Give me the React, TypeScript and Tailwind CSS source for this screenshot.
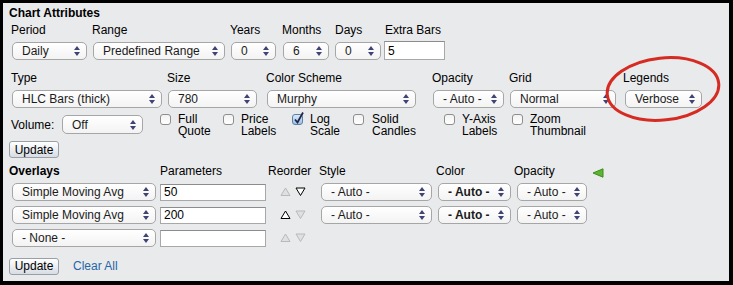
import React from "react";

type SelectProps = {
  value: string;
  className?: string;
  bold?: boolean;
};

function UpDown() {
  return (
    <svg width="6" height="10" viewBox="0 0 6 10" className="shrink-0">
      <path d="M0 4L3 0L6 4Z M0 6L3 10L6 6Z" fill="#3e4373" />
    </svg>
  );
}

function Select({ value, className = "", bold = false }: SelectProps) {
  return (
    <div
      className={`flex h-[18px] items-center justify-between rounded-[5px] border border-[#a6a6a6] bg-linear-to-b from-white to-[#f3f3f3] pl-[9px] pr-[6px] text-[12px] leading-none text-[#1b1b1b] ${
        bold ? "font-bold" : ""
      } ${className}`}
    >
      <span className="whitespace-nowrap">{value}</span>
      <UpDown />
    </div>
  );
}

function TextInput({ value = "", className = "" }: { value?: string; className?: string }) {
  return (
    <div
      className={`flex items-center border border-[#a8a8a8] border-t-[#8c8c8c] bg-white pl-[3px] text-[12px] leading-none text-black ${className}`}
    >
      {value}
    </div>
  );
}

function Field({
  label,
  className = "",
  children,
}: {
  label: string;
  className?: string;
  children: React.ReactNode;
}) {
  return (
    <div className={`flex shrink-0 flex-col ${className}`}>
      <span className="h-[15px] whitespace-nowrap leading-[15px]">{label}</span>
      {children}
    </div>
  );
}

function Check({
  top,
  bottom,
  checked = false,
  className = "",
  gap = "ml-[7px]",
}: {
  top: string;
  bottom: string;
  checked?: boolean;
  className?: string;
  gap?: string;
}) {
  return (
    <div className={`flex shrink-0 items-start ${className}`}>
      {checked ? (
        <div className="relative h-[11px] w-[11px] shrink-0 rounded-[3px] border border-[#5d7fa8] bg-linear-to-b from-[#dbe9f8] to-[#9ec0e6]">
          <svg
            width="12"
            height="14"
            viewBox="0 0 12 14"
            className="absolute -top-[4px] left-[0px] overflow-visible"
          >
            <path d="M2 8.5L4.5 11.5L10 1.5" fill="none" stroke="#1d2747" strokeWidth="1.8" />
          </svg>
        </div>
      ) : (
        <div className="h-[11px] w-[11px] shrink-0 rounded-[3px] border border-[#8e8e8e] bg-linear-to-b from-[#f2f2f2] to-white" />
      )}
      <div className={`${gap} -mt-[1px] flex flex-col leading-[12px]`}>
        <span>{top}</span>
        <span>{bottom}</span>
      </div>
    </div>
  );
}

function Button({ className = "" }: { className?: string }) {
  return (
    <div
      className={`flex h-[17px] w-[50px] shrink-0 items-center justify-center rounded-[3px] border border-[#9a9fa6] bg-linear-to-b from-white to-[#d7dde5] text-[12px] leading-none text-black ${className}`}
    >
      Update
    </div>
  );
}

function Tri({ dir, dark }: { dir: "up" | "down"; dark: boolean }) {
  const d = dir === "up" ? "M1 8.5L5.5 1L10 8.5Z" : "M1 1L5.5 8.5L10 1Z";
  return (
    <svg width="11" height="10" viewBox="0 0 11 10" className="shrink-0">
      <path
        d={d}
        fill={dark ? "white" : "#e0e0e0"}
        stroke={dark ? "#000" : "#b9b9b9"}
        strokeWidth="1"
      />
    </svg>
  );
}

function OverlayRow({
  name,
  param,
  up,
  down,
  full,
}: {
  name: string;
  param: string;
  up: boolean;
  down: boolean;
  full: boolean;
}) {
  return (
    <div className="flex h-[18px] items-center">
      <Select value={name} className="ml-px w-[144px] shrink-0" />
      <TextInput value={param} className="ml-[4px] h-[17px] w-[106px] shrink-0" />
      <div className="ml-[14px] flex w-[26px] shrink-0 items-center justify-between">
        <Tri dir="up" dark={up} />
        <Tri dir="down" dark={down} />
      </div>
      {full && (
        <>
          <Select value="- Auto -" className="ml-[15px] w-[111px] shrink-0" />
          <Select value="- Auto -" bold className="ml-[6px] w-[73px] shrink-0" />
          <Select value="- Auto -" className="ml-[6px] w-[70px] shrink-0" />
        </>
      )}
    </div>
  );
}

export default function App() {
  return (
    <div className="relative h-[285px] w-[733px] overflow-hidden border-b-4 border-l-[3px] border-r-4 border-t-[3px] border-black bg-[#e9eaec] pl-[8px] pt-[3px] font-['Liberation_Sans',Arial,sans-serif] text-[12px] text-black">
      <div className="-ml-[2px] h-[14px] font-bold leading-[14px]">Chart Attributes</div>

      {/* row 1 */}
      <div className="mt-[3px] flex">
        <Field label="Period" className="w-[81px]">
          <Select value="Daily" className="ml-px mt-[4px] w-[75px]" />
        </Field>
        <Field label="Range" className="w-[138px]">
          <Select value="Predefined Range" className="ml-px mt-[4px] w-[132px]" />
        </Field>
        <Field label="Years" className="w-[52px]">
          <Select value="0" className="ml-px mt-[4px] w-[45px]" />
        </Field>
        <Field label="Months" className="w-[53px]">
          <Select value="6" className="ml-px mt-[4px] w-[46px]" />
        </Field>
        <Field label="Days" className="w-[50px]">
          <Select value="0" className="mt-[4px] w-[46px]" />
        </Field>
        <Field label="Extra Bars">
          <TextInput value="5" className="-ml-px mt-[3px] h-[19px] w-[61px]" />
        </Field>
      </div>

      {/* row 2 */}
      <div className="mt-[11px] flex">
        <Field label="Type" className="w-[156px]">
          <Select value="HLC Bars (thick)" className="ml-px mt-[4px] w-[150px]" />
        </Field>
        <Field label="Size" className="w-[99px]">
          <Select value="780" className="ml-px mt-[4px] w-[89px]" />
        </Field>
        <Field label="Color Scheme" className="w-[166px]">
          <Select value="Murphy" className="ml-px mt-[4px] w-[149px]" />
        </Field>
        <Field label="Opacity" className="w-[77px]">
          <Select value="- Auto -" className="ml-px mt-[4px] w-[71px]" />
        </Field>
        <Field label="Grid" className="w-[114px]">
          <Select value="Normal" className="ml-px mt-[4px] w-[106px]" />
        </Field>
        <Field label="Legends">
          <Select value="Verbose" className="ml-[2px] mt-[4px] w-[77px]" />
        </Field>
      </div>

      {/* row 3 */}
      <div className="mt-[6px] flex items-start">
        <div className="flex w-[149px] shrink-0 items-start">
          <span className="mt-[4px] w-[51px] leading-[15px]">Volume:</span>
          <Select value="Off" className="mt-px h-[19px] w-[81px]" />
        </div>
        <Check top="Full" bottom="Quote" className="w-[63px]" />
        <Check top="Price" bottom="Labels" className="w-[69px]" />
        <Check top="Log" bottom="Scale" checked className="w-[61px]" />
        <Check top="Solid" bottom="Candles" gap="ml-[8px]" className="w-[91px]" />
        <Check top="Y-Axis" bottom="Labels" className="w-[68px]" />
        <Check top="Zoom" bottom="Thumbnail" />
      </div>

      <Button className="-ml-[2px] mt-[4px]" />

      {/* overlays header */}
      <div className="mt-[6px] flex h-[15px] items-start leading-[15px]">
        <span className="-ml-[2px] w-[151px] shrink-0 font-bold">Overlays</span>
        <span className="w-[108px] shrink-0">Parameters</span>
        <span className="w-[51px] shrink-0">Reorder</span>
        <span className="w-[117px] shrink-0">Style</span>
        <span className="w-[78px] shrink-0">Color</span>
        <span className="w-[78px] shrink-0">Opacity</span>
        <svg width="12" height="10" viewBox="0 0 12 10" className="mt-[4px] shrink-0">
          <path d="M11 0.8L1 5L11 9.2Z" fill="#5cb531" stroke="#3f8a1f" strokeWidth="1" />
        </svg>
      </div>

      <div className="mt-[4px] flex flex-col gap-[5px]">
        <OverlayRow name="Simple Moving Avg" param="50" up={false} down full />
        <OverlayRow name="Simple Moving Avg" param="200" up down={false} full />
        <OverlayRow name="- None -" param="" up={false} down={false} full={false} />
      </div>

      <div className="mt-[10px] flex items-center">
        <Button className="-ml-[2px]" />
        <span className="ml-[14px] text-[#2566a6]">Clear All</span>
      </div>

      {/* red annotation ellipse */}
      <svg
        width="120"
        height="70"
        viewBox="0 0 120 70"
        className="pointer-events-none absolute left-[600px] top-[52px]"
      >
        <ellipse
          cx="60"
          cy="34"
          rx="56"
          ry="31"
          transform="rotate(-6 60 34)"
          fill="none"
          stroke="#d62b22"
          strokeWidth="3"
        />
      </svg>
    </div>
  );
}
